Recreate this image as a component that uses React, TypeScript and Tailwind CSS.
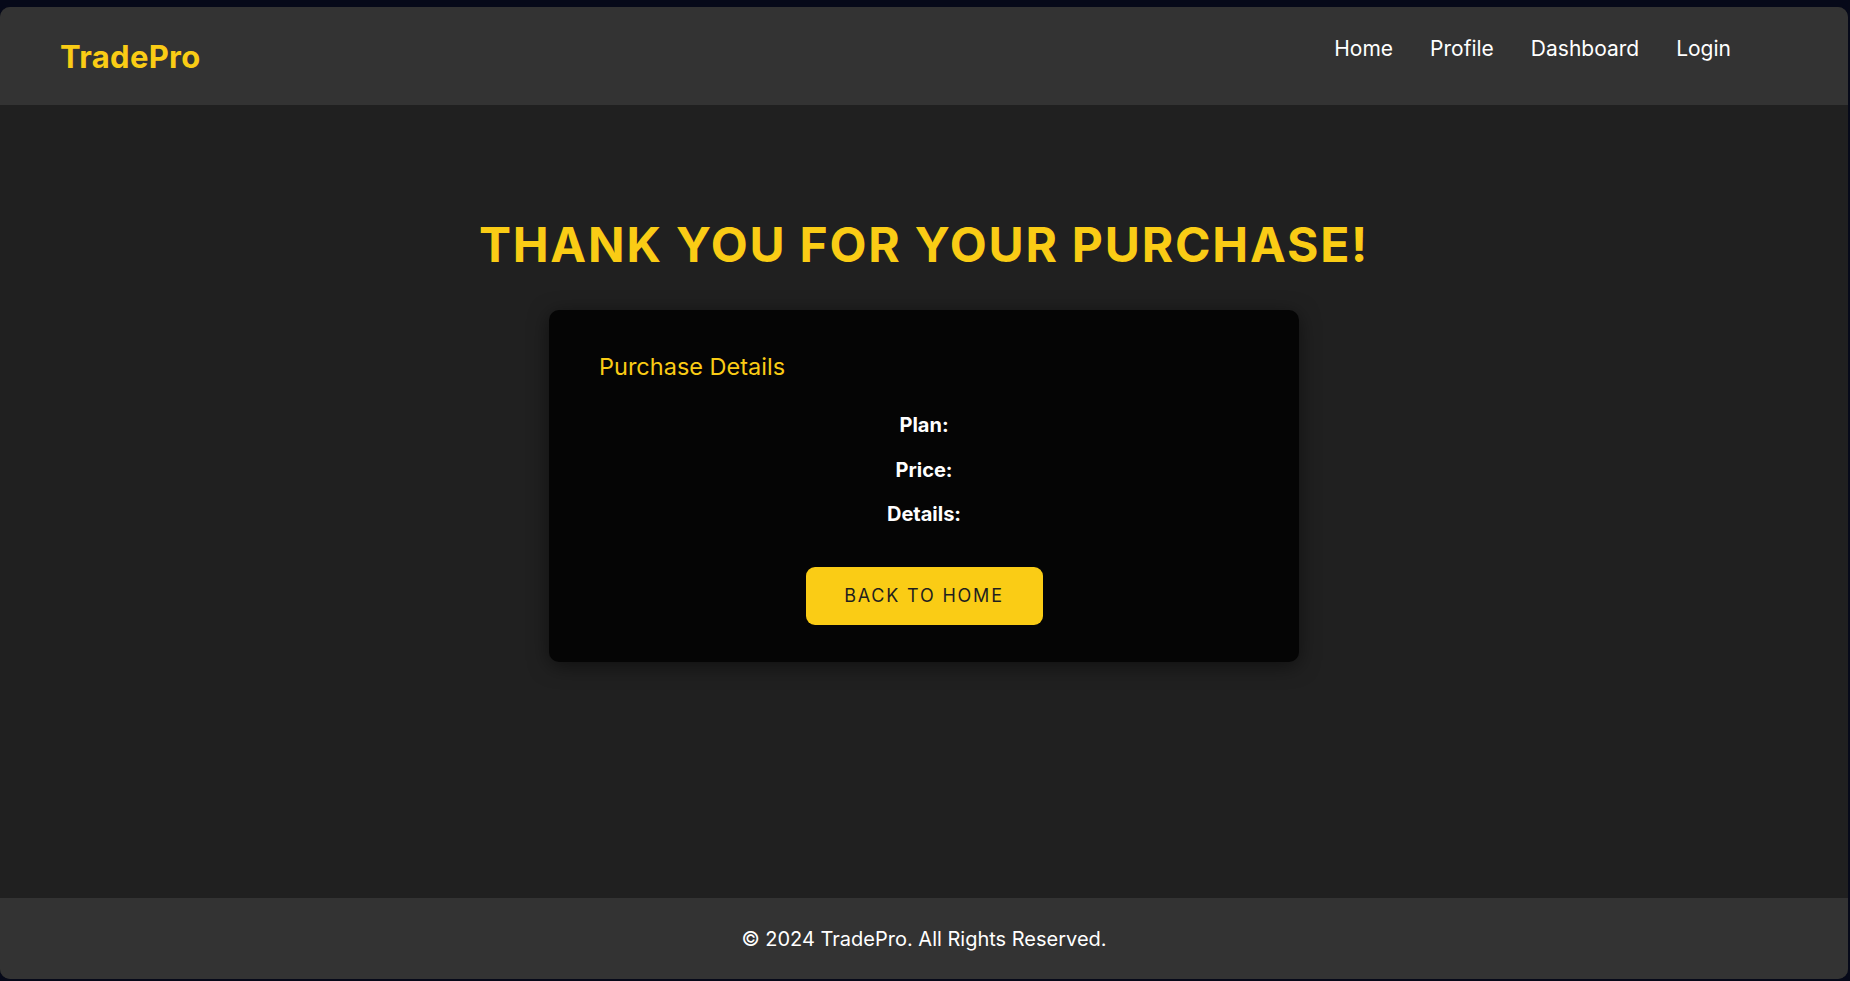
import React from "react";

const font = { fontFamily: "Inter, 'Noto Sans', sans-serif" };

export default function App() {
  return (
    <div className="h-[981px] w-full bg-[#060919] pt-[7px] pr-[2px] pb-[2px] overflow-hidden" style={font}>
      <div className="h-[972px] rounded-[10px] overflow-hidden flex flex-col bg-[#202020]">
        <header className="h-[98px] shrink-0 bg-[#333333] flex items-center justify-between pl-[60px] pr-[117px]">
          <div className="text-[31px] font-bold text-[#facc15] leading-none tracking-[0.3px]">TradePro</div>
          <nav className="flex items-center gap-[37px] mb-[16px]">
            {["Home", "Profile", "Dashboard", "Login"].map((l) => (
              <a key={l} href="#" className="text-[21px] text-white leading-none">
                {l}
              </a>
            ))}
          </nav>
        </header>
        <main className="flex-1 flex flex-col items-center pt-[111px]">
          <h1 className="text-[48px] leading-[58px] font-bold text-[#facc15] tracking-[1.8px] uppercase">
            Thank You For Your Purchase!
          </h1>
          <div className="mt-[36px] w-[750px] rounded-[10px] bg-[#050505] shadow-[0_4px_20px_rgba(0,0,0,0.5)] px-[50px] pt-[40px] pb-[37px] flex flex-col">
            <h3 className="text-[23.5px] leading-[33px] text-[#facc15]">Purchase Details</h3>
            <div className="mt-[28px] flex flex-col items-center gap-[16.5px]">
              <p className="text-[20px] leading-[28px] font-bold text-white">Plan:</p>
              <p className="text-[20px] leading-[28px] font-bold text-white">Price:</p>
              <p className="text-[20px] leading-[28px] font-bold text-white">Details:</p>
            </div>
            <div className="mt-[38.5px] flex justify-center">
              <button className="h-[58px] w-[237px] rounded-[9px] bg-[#facc15] text-[#1f1f1f] text-[18px] tracking-[1.8px] uppercase">
                Back to Home
              </button>
            </div>
          </div>
        </main>
        <footer className="h-[81px] shrink-0 bg-[#333333] flex items-center justify-center">
          <p className="text-[20px] text-white">© 2024 TradePro. All Rights Reserved.</p>
        </footer>
      </div>
    </div>
  );
}
